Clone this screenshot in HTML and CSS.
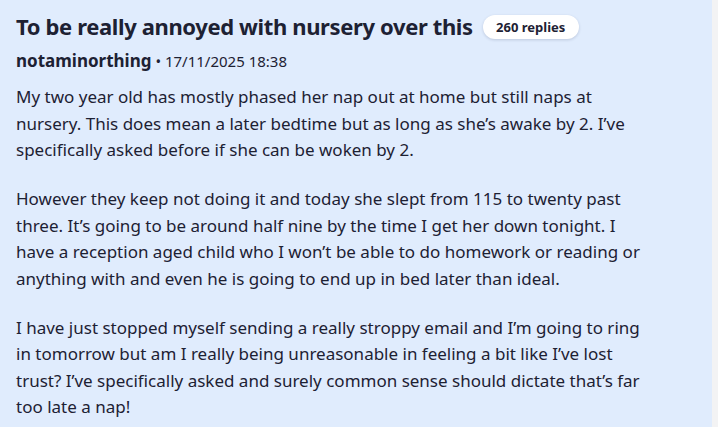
FILE: index.html
```html
<!DOCTYPE html>
<html lang="en">
<head>
<meta charset="utf-8">
<title>Thread</title>
<link rel="stylesheet" href="styles.css">
</head>
<body>
<main class="page">
  <article class="post">
    <header class="post-head">
      <h1 class="title">To be really annoyed with nursery over this</h1>
      <span class="badge">260 replies</span>
    </header>
    <div class="meta"><span class="author">notaminorthing</span> <span class="dot">•</span> <span class="date">17/11/2025 18:38</span></div>
    <div class="body">
      <p>My two year old has mostly phased her nap out at home but still naps at nursery. This does mean a later bedtime but as long as she’s awake by 2. I’ve specifically asked before if she can be woken by 2.</p>
      <p>However they keep not doing it and today she slept from 115 to twenty past three. It’s going to be around half nine by the time I get her down tonight. I have a reception aged child who I won’t be able to do homework or reading or anything with and even he is going to end up in bed later than ideal.</p>
      <p>I have just stopped myself sending a really stroppy email and I’m going to ring in tomorrow but am I really being unreasonable in feeling a bit like I’ve lost trust? I’ve specifically asked and surely common sense should dictate that’s far too late a nap!</p>
    </div>
  </article>
</main>
</body>
</html>
```

FILE: styles.css
```css
* { box-sizing: border-box; }
html, body { margin: 0; padding: 0; height: 100%; }
body {
  background: #f3f3f4;
  font-family: "Noto Sans", "Open Sans", sans-serif;
  color: #1d2133;
  overflow: hidden;
}
.page {
  width: 712px;
  height: 427px;
  background: #e0ecfd;
}
.post {
  padding: 10px 16px 0 16px;
}
.post-head {
  display: flex;
  align-items: center;
  gap: 10px;
  height: 32px;
}
.title {
  margin: 0;
  font-size: 22px;
  font-weight: 700;
  line-height: 32px;
  letter-spacing: -0.37px;
}
.badge {
  display: inline-flex;
  align-items: center;
  justify-content: center;
  width: 96px;
  height: 24px;
  background: #ffffff;
  border-radius: 12px;
  box-shadow: 0 1px 3px rgba(30, 40, 80, 0.18);
  font-size: 13px;
  font-weight: 700;
  margin-top: 2px;
}
.meta {
  margin-top: 8px;
  font-size: 15px;
  line-height: 22px;
}
.author { font-weight: 700; font-size: 17px; }
.dot { margin: 0; }
.body {
  margin-top: 12px;
  width: 640px;
}
.body p {
  margin: 0 0 22.5px 0;
  font-size: 17px;
  line-height: 26.5px;
}
```
